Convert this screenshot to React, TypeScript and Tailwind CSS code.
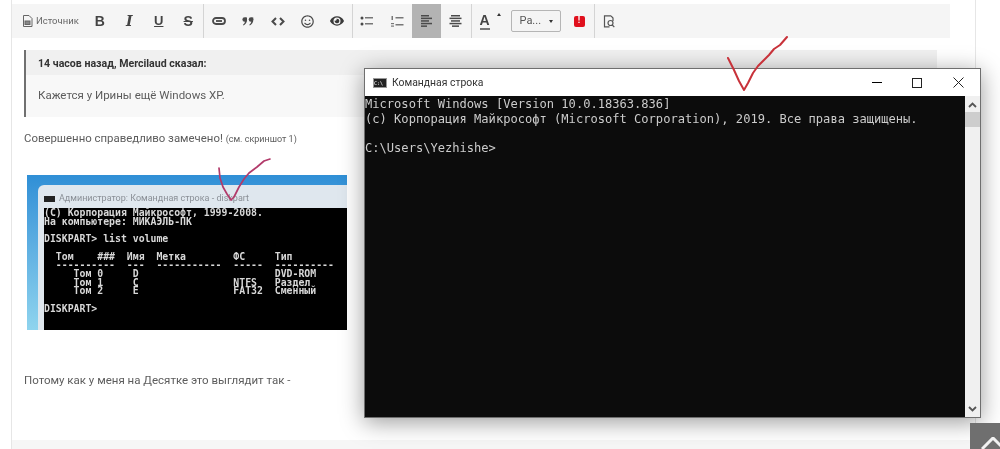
import { FaEye, FaRegSmile } from "react-icons/fa";

const ICON = "#4a4a4a";

function Btn({ children, active }: { children: React.ReactNode; active?: boolean }) {
    return (
        <div
            className={
                "w-[29.5px] h-[34px] flex items-center justify-center shrink-0 " +
                (active ? "bg-[#b3b3b3]" : "")
            }
        >
            {children}
        </div>
    );
}

function Sep() {
    return <div className="w-px h-[34px] bg-[#d4d4d4] shrink-0" />;
}

function Lines({ rows }: { rows: [number, number][] }) {
    return (
        <svg width="13" height="12" viewBox="0 0 13 12">
            {rows.map(([x, w], i) => (
                <rect key={i} x={x} y={i * 2.6} width={w} height="1.5" fill={ICON} />
            ))}
        </svg>
    );
}

function Toolbar() {
    return (
        <div className="w-[938px] h-[34px] mt-[4px] bg-[#f5f5f5] flex items-center">
            <div className="w-[73px] h-[34px] flex items-center pl-[10px] gap-[3px] shrink-0">
                <svg width="11" height="12" viewBox="0 0 11 12" fill="none" stroke="#666" strokeWidth="1">
                    <path d="M1.5.5h5.5l3 3v8h-8.500z" />
                    <rect x="3" y="6" width="5" height="3.500" fill="#888" />
                </svg>
                <span className="text-[9.500px] text-[#666]">Источник</span>
            </div>
            <Btn><span className="text-[14px] font-bold text-[#444] font-['Liberation_Sans',sans-serif]">B</span></Btn>
            <Btn><span className="text-[14px] italic font-bold text-[#444] font-['DejaVu_Serif',serif]">I</span></Btn>
            <Btn><span className="text-[13px] font-bold underline text-[#444] font-['Liberation_Sans',sans-serif]">U</span></Btn>
            <Btn><span className="text-[14px] font-bold line-through text-[#444] font-['Liberation_Sans',sans-serif]">S</span></Btn>
            <Sep />
            <Btn>
                <svg width="14" height="8" viewBox="0 0 14 8" fill="none" stroke={ICON} strokeWidth="1.800">
                    <rect x="1" y="1" width="12" height="6" rx="3" />
                    <path d="M4 4h6" />
                </svg>
            </Btn>
            <Btn>
                <svg width="12" height="9" viewBox="0 0 12 9" fill={ICON}>
                    <circle cx="2.700" cy="2.500" r="2.300" />
                    <path d="M3 .5h2v2.500c0 2.500-1.500 4.500-3.500 5.500l-.5-.8c1-.7 2-2 2-3.700z" />
                    <circle cx="9" cy="2.500" r="2.300" />
                    <path d="M9.300.5h2v2.500c0 2.500-1.500 4.500-3.500 5.500l-.5-.8c1-.7 2-2 2-3.700z" />
                </svg>
            </Btn>
            <Btn>
                <svg width="14" height="9" viewBox="0 0 14 9" fill="none" stroke={ICON} strokeWidth="2">
                    <path d="M5 1L1.500 4.500 5 8M9 1l3.500 3.500L9 8" />
                </svg>
            </Btn>
            <Btn><FaRegSmile size={13} color={ICON} /></Btn>
            <Btn><FaEye size={14} color="#3a3a3a" /></Btn>
            <Sep />
            <Btn>
                <svg width="14" height="10" viewBox="0 0 14 10" fill={ICON}>
                    <circle cx="2" cy="2" r="1.500" />
                    <circle cx="2" cy="8" r="1.500" />
                    <rect x="5" y="1" width="8" height="1.500" fill="#777" />
                    <rect x="5" y="7" width="8" height="1.500" fill="#777" />
                </svg>
            </Btn>
            <Btn>
                <svg width="14" height="11" viewBox="0 0 14 11" fill="#777">
                    <rect x="1.500" y="0" width="1.500" height="4" />
                    <rect x="1" y="7" width="3" height="1.200" />
                    <rect x="1" y="9.500" width="3" height="1.200" />
                    <rect x="5.500" y="1" width="8" height="1.500" />
                    <rect x="5.500" y="8" width="8" height="1.500" />
                </svg>
            </Btn>
            <Btn active>
                <Lines rows={[[1, 8], [1, 11], [1, 8], [1, 11], [1, 6]]} />
            </Btn>
            <Btn>
                <Lines rows={[[2, 9], [0.500, 12], [2, 9], [0.500, 12], [3, 7]]} />
            </Btn>
            <Sep />
            <div className="w-[39px] h-[34px] relative shrink-0 flex items-center pl-[8px]">
                <span className="text-[14px] font-bold text-[#444] border-b-2 border-[#777] leading-[15px] font-['Liberation_Sans',sans-serif]">A</span>
                <span className="absolute left-[25px] top-[9px] w-0 h-0 border-x-[2px] border-b-[3px] border-x-transparent border-b-[#333]" />
            </div>
            <div className="w-[50px] h-[22px] bg-[#f4f4f4] border border-[#b5b5b5] rounded-[2px] flex items-center pl-[8px] text-[11px] text-[#555] shrink-0">
                <span>Ра...</span>
                <span className="ml-[8px] w-0 h-0 border-x-[2.500px] border-t-[3px] border-x-transparent border-t-[#333]" />
            </div>
            <div className="w-[33px] h-[34px] flex items-center pl-[13px] shrink-0">
                <div className="w-[11px] h-[11px] bg-[#e0101d] rounded-[2px] flex items-center justify-center text-white text-[9px] font-bold">!</div>
            </div>
            <Sep />
            <Btn>
                <svg width="12" height="13" viewBox="0 0 12 13" fill="none" stroke="#555" strokeWidth="1.200">
                    <path d="M8 .8H1.500v11h5M8 .8l2 2.200v3" />
                    <circle cx="7.500" cy="8" r="2.500" />
                    <path d="M9.300 10l2 2.200" />
                </svg>
            </Btn>
        </div>
    );
}

function Quote() {
    return (
        <div className="ml-[12px] mt-[12px] w-[913px] h-[67px] border-l-2 border-[#707070] bg-[#f8f8f8]">
            <div className="h-[25px] bg-[#f0f0f0] pl-[12px] pt-[2px] flex items-center text-[10.600px] font-bold text-[#333]">
                14 часов назад, Mercilaud сказал:
            </div>
            <div className="h-[42px] pl-[12px] flex items-center text-[11.500px] text-[#5c5c5c]">
                Кажется у Ирины ещё Windows XP.
            </div>
        </div>
    );
}

const DISKPART = `(C) Корпорация Майкрософт, 1999-2008.
На компьютере: МИКАЭЛЬ-ПК

DISKPART> list volume

  Том    ###  Имя  Метка        ФС     Тип
  ----------  ---  -----------  -----  ----------
     Том 0     D                       DVD-ROM
     Том 1     C                NTFS   Раздел
     Том 2     E                FAT32  Сменный

DISKPART>`;

function OldScreenshot() {
    return (
        <div className="ml-[15px] mt-[29px] w-[320px] h-[155px] bg-gradient-to-b from-[#2f8fd6] to-[#8fd4ee] pt-[10px] pl-[11px] overflow-hidden">
            <div className="h-[145px] bg-[#dfe7ee] rounded-tl-[6px] pl-[6px] pt-[8px] flex flex-col">
                <div className="h-[11px] flex items-center gap-[4px] text-[9px] text-[#8a8f96] whitespace-nowrap">
                    <span className="w-[11px] h-[6px] bg-[#222]" />
                    Администратор: Командная строка - diskpart
                </div>
                <pre className="mt-[4px] flex-1 bg-black text-[#d8d8d8] font-bold text-[9.830px] leading-[8.700px] pt-[1px] overflow-hidden font-['DejaVu_Sans_Mono',monospace]">
                    {DISKPART}
                </pre>
            </div>
        </div>
    );
}

function CmdWindow() {
    return (
        <div className="absolute left-[364px] top-[68px] w-[617px] h-[350px] border border-[#6f6f6f] bg-white shadow-[0_4px_22px_rgba(0,0,0,0.4)] flex flex-col">
            <div className="h-[27px] flex items-center pl-[8px] shrink-0">
                <div className="w-[14px] h-[10px] bg-[#222] border border-[#999] text-white text-[5px] leading-[8px] font-['DejaVu_Sans_Mono',monospace]">C:\</div>
                <span className="ml-[5px] text-[10.400px] text-[#333]">Командная строка</span>
                <div className="ml-auto flex items-center shrink-0 h-[27px]">
                    <div className="w-[10px] h-px bg-black mr-[30px]" />
                    <div className="w-[10px] h-[10px] border border-[#222] mr-[31px]" />
                    <svg width="11" height="11" viewBox="0 0 11 11" stroke="#222" strokeWidth="1" className="mr-[16px]">
                        <path d="M.5.5l10 10M10.500.5l-10 10" />
                    </svg>
                </div>
            </div>
            <div className="flex-1 flex min-h-0">
                <pre className="flex-1 bg-[#0c0c0c] text-[#cccccc] text-[12.080px] leading-[14.500px] pt-[1px] font-['DejaVu_Sans_Mono',monospace] overflow-hidden">
                    {`Microsoft Windows [Version 10.0.18363.836]
(c) Корпорация Майкрософт (Microsoft Corporation), 2019. Все права защищены.

C:\\Users\\Yezhishe>`}
                </pre>
                <div className="w-[15px] bg-[#f0f0f0] flex flex-col items-center">
                    <svg width="9" height="6" viewBox="0 0 9 6" fill="none" stroke="#555" strokeWidth="1.800" className="mt-[6px]">
                        <path d="M1 5l3.500-3.500L8 5" />
                    </svg>
                    <div className="w-full h-[15px] bg-[#cdcdcd] mt-[4px]" />
                    <svg width="9" height="6" viewBox="0 0 9 6" fill="none" stroke="#555" strokeWidth="1.800" className="mt-auto mb-[5px]">
                        <path d="M1 1l3.500 3.500L8 1" />
                    </svg>
                </div>
            </div>
        </div>
    );
}

export default function App() {
    return (
        <div className="relative w-[1000px] h-[449px] overflow-hidden bg-white blur-[0.4px] font-['Roboto',sans-serif]">
            <div className="ml-[11px] w-[965px] h-[449px] border-x border-[#e6e6e6] flex flex-col">
                <Toolbar />
                <Quote />
                <p className="ml-[12px] mt-[14px] h-[15px] leading-[15px] text-[11.400px] text-[#5c5c5c]">
                    Совершенно справедливо замечено! <span className="text-[9px]">(см. скриншот 1)</span>
                </p>
                <OldScreenshot />
                <p className="ml-[12px] mt-[43px] h-[15px] leading-[15px] text-[11.500px] text-[#5c5c5c]">
                    Потому как у меня на Десятке это выглядит так -
                </p>
                <div className="mt-auto h-[9px] bg-[#f6f6f6]" />
            </div>

            <CmdWindow />

            {/* red ticks drawn over the screenshots */}
            <svg className="absolute left-0 top-0 pointer-events-none" width="1000" height="449" fill="none" stroke="#c8323a" strokeLinecap="round" strokeLinejoin="round">
                <path strokeWidth="2" d="M728 58l6 12 5 11 5 9 4-7 5-10 5-7 6-6 5-5 5-6 6-4 7-8" />
                <path strokeWidth="1.700" stroke="#b23a6a" d="M219 168l1 10 3 9 4 7 4 6 3-3 5-10 5-8 5-6 8-6 7-6 6-2" />
            </svg>

            <div className="absolute left-[970px] top-[423px] w-[30px] h-[26px] bg-[#6f6f6f] pl-[11px] pt-[14px]">
                <svg width="19" height="12" viewBox="0 0 19 12" fill="none" stroke="#f2f2f2" strokeWidth="3">
                    <path d="M1 12L12 1l11 11" />
                </svg>
            </div>
        </div>
    );
}
